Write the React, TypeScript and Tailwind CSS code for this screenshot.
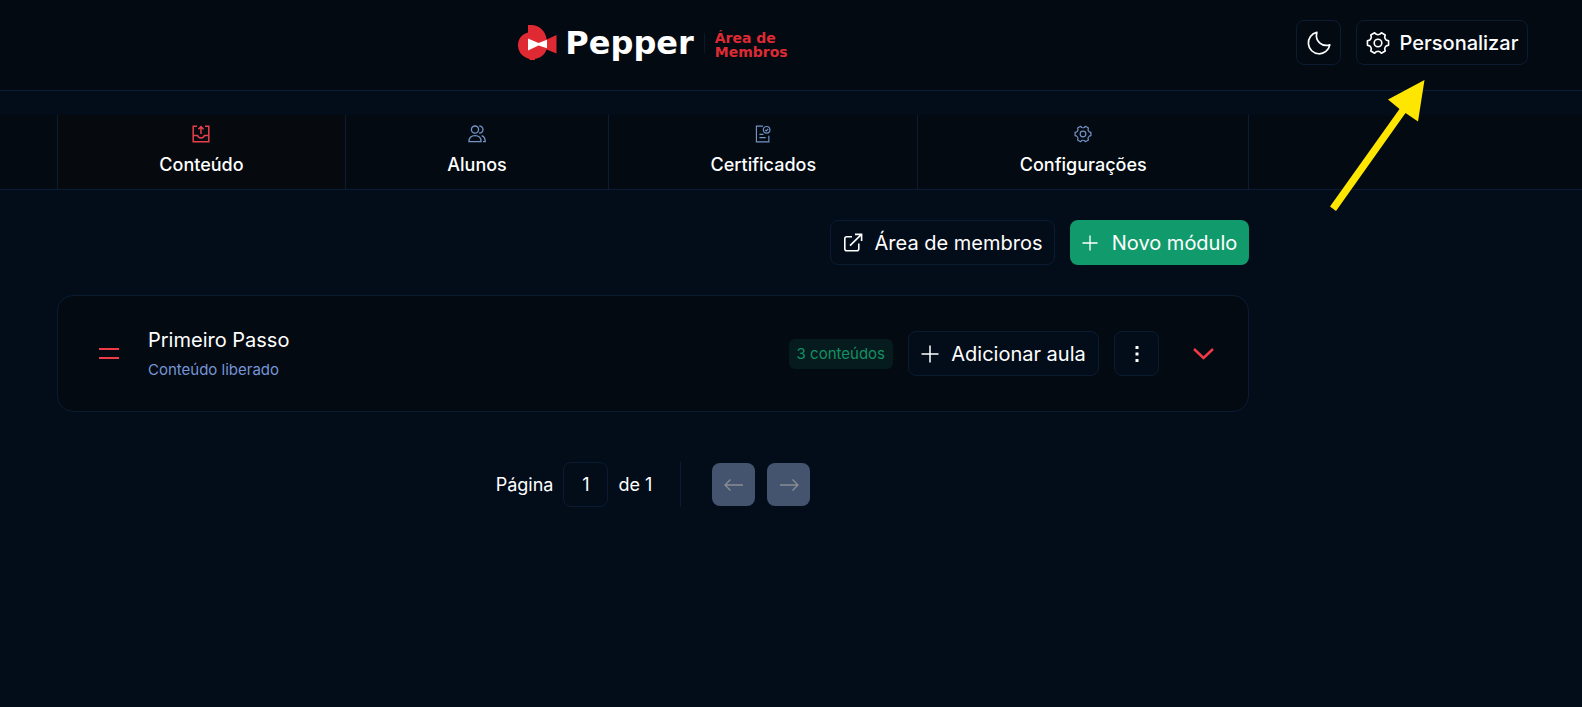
import type { ReactNode } from "react";

type IconProps = { className?: string };

function gearPath() {
  const point = (r: number, deg: number) => {
    const a = (deg * Math.PI) / 180;
    return `${(12 + r * Math.cos(a)).toFixed(2)} ${(12 + r * Math.sin(a)).toFixed(2)}`;
  };
  let d = `M${point(10.8, -12)}`;
  for (let deg = 0; deg < 360; deg += 60) {
    d += `L${point(10.8, deg + 12)}L${point(8.8, deg + 19)}Q${point(8, deg + 30)} ${point(8.8, deg + 41)}L${point(10.8, deg + 48)}`;
  }
  return d + "Z";
}

const GEAR = gearPath();

function GearIcon({ className }: IconProps) {
  return (
    <svg viewBox="0 0 24 24" fill="none" stroke="currentColor" strokeWidth="1.6" strokeLinejoin="round" className={className}>
      <path d={GEAR} />
      <circle cx="12" cy="12" r="3.8" />
    </svg>
  );
}

function MoonIcon({ className }: IconProps) {
  return (
    <svg viewBox="2 2 20 20" fill="none" stroke="currentColor" strokeWidth="1.4" strokeLinejoin="round" className={className}>
      <path d="M10.2 3.2A9 9 0 1 0 21 13.600C14.500 15.500 8.400 10.500 10.2 3.2Z" />
    </svg>
  );
}

function TrayIcon({ className }: IconProps) {
  return (
    <svg viewBox="0 0 18 18" fill="none" stroke="currentColor" strokeWidth="1.5" className={className}>
      <path d="M5 1.2H1.2V16.8H16.8V1.2H13" />
      <path d="M1.2 10.5H5.6C6.2 12.2 7.4 13 9 13S11.8 12.2 12.4 10.5H16.8" />
      <path d="M9 9V1.8M6.4 4.2L9 1.6L11.6 4.2" />
    </svg>
  );
}

function UsersIcon({ className }: IconProps) {
  return (
    <svg viewBox="0 0 18 18" fill="none" stroke="currentColor" strokeWidth="1.3" className={className}>
      <circle cx="7" cy="4.6" r="3.6" />
      <path d="M.9 16.6C.9 12.8 3 10.6 7 10.6S13.1 12.8 13.1 16.6Z" />
      <path d="M11.2 1.2C13.4.8 15 2.4 15 4.6S13.4 8.2 11.2 8M13.6 10.7C16 11.4 17.2 13.4 17.2 16.6H15" />
    </svg>
  );
}

function CertificateIcon({ className }: IconProps) {
  return (
    <svg viewBox="0 0 18 20" fill="none" stroke="currentColor" strokeWidth="1.3" className={className}>
      <path d="M9 1.2H1.7V18.8H15.5V12" />
      <circle cx="13" cy="5.4" r="3.7" />
      <path d="M11.3 5.4L12.6 6.6L14.8 4.4M5 10.5H9.5M5 14H12" />
    </svg>
  );
}

function ExternalIcon({ className }: IconProps) {
  return (
    <svg viewBox="0 0 20 20" fill="none" stroke="currentColor" strokeWidth="1.6" className={className}>
      <path d="M9 3.8H3.8Q1.8 3.8 1.8 5.8V15.8Q1.8 17.8 3.8 17.8H13.8Q15.8 17.8 15.8 15.8V10.4" />
      <path d="M7 12.6L18.2 1.6M12 1.4H18.6V8" />
    </svg>
  );
}

function PlusIcon({ className }: IconProps) {
  return (
    <svg viewBox="0 0 18 18" fill="none" stroke="currentColor" strokeWidth="1.5" className={className}>
      <path d="M9 .5V17.5M.5 9H17.5" />
    </svg>
  );
}

function ArrowIcon({ className }: IconProps) {
  return (
    <svg viewBox="0 0 20 14" fill="none" stroke="currentColor" strokeWidth="1.3" className={className}>
      <path d="M1 7H19M6.5 1.5L1 7L6.5 12.5" />
    </svg>
  );
}

function Logo() {
  return (
    <a href="#" className="flex items-center text-[#df2a33]" aria-label="Pepper Área de Membros">
      <svg viewBox="0 0 39 36" className="h-9 w-[39px]">
        <path
          fill="currentColor"
          d="M10 0H13C21 0 27.500 5.500 28.700 14.500L38.500 10V28.500L28.500 24.500C27 29.500 22.500 33.200 17 33.800V35H12L11 33.700C4.500 32 0 27 0 20.500C0 13.500 4 9 10 7.500Z"
        />
        <path fill="#fff" d="M10 13.500L20.500 18L29 14.800V23.200L20.500 20.500L10 25.500Z" />
      </svg>
      <span className="ml-2 font-['DejaVu_Sans',sans-serif] text-[32px] leading-9 font-bold text-white">Pepper</span>
      <span className="ml-2.5 h-5 w-px bg-[#0a1828]" />
      <span className="ml-2.5 pt-1 font-['DejaVu_Sans',sans-serif] text-[14px] leading-[14px] font-bold">
        Área de
        <br />
        Membros
      </span>
    </a>
  );
}

function Tab({ icon, label, active }: { icon: ReactNode; label: string; active?: boolean }) {
  return (
    <button
      role="tab"
      aria-selected={!!active}
      className={`flex flex-auto flex-col items-center gap-2.5 border-r border-[#0e1c31] pt-2.5 ${active ? "bg-[#06090d] text-[#e8404a]" : "text-[#7592c4]"}`}
    >
      {icon}
      <span className="text-lg leading-6 font-medium text-white">{label}</span>
    </button>
  );
}

const outlined = "flex h-[45px] items-center justify-center rounded-lg border border-[#0b1c32]";

export default function App() {
  return (
    <div className="relative min-h-screen overflow-hidden bg-[#030c19] font-['Inter',sans-serif] text-white">
      <header className="flex h-[91px] border-b border-[#0b1c36] bg-[#030a12] pr-[54px] pl-[57px]">
        <div className="flex w-full max-w-[1192px] items-center justify-center pb-1">
          <Logo />
        </div>
        <div className="ml-auto flex shrink-0 gap-[15px] pt-5">
          <button className={`${outlined} w-[45px]`} aria-label="Tema escuro">
            <MoonIcon className="size-6" />
          </button>
          <button className={`${outlined} w-[172px] gap-2.5 text-xl font-medium`}>
            <GearIcon className="size-6" />
            Personalizar
          </button>
        </div>
      </header>

      <nav className="mt-6 h-[75px] border-b border-[#0b1c36] bg-[#030a12] pl-[57px]">
        <div role="tablist" className="flex h-full w-full max-w-[1192px] border-l border-[#0e1c31]">
          <Tab active icon={<TrayIcon className="size-[18px]" />} label="Conteúdo" />
          <Tab icon={<UsersIcon className="size-[18px]" />} label="Alunos" />
          <Tab icon={<CertificateIcon className="size-[18px]" />} label="Certificados" />
          <Tab icon={<GearIcon className="size-[18px]" />} label="Configurações" />
        </div>
      </nav>

      <main className="pt-[30px] pl-[57px]">
        <div className="w-full max-w-[1192px]">
          <div className="flex justify-end gap-[15px] text-xl">
            <a href="#" className={`${outlined} w-[225px] gap-3`}>
              <ExternalIcon className="size-5" />
              Área de membros
            </a>
            <button className="flex h-[45px] w-[179px] items-center justify-center gap-3.5 rounded-lg bg-[#119b6c]">
              <PlusIcon className="size-4" />
              Novo módulo
            </button>
          </div>

          <section className="mt-[30px] flex h-[117px] items-center rounded-2xl border border-[#0b1c32] bg-[#030a12] pr-[34px] pl-[41px]">
            <button aria-label="Reordenar" className="text-[#f03a45]">
              <svg viewBox="0 0 20 12" fill="none" stroke="currentColor" strokeWidth="2" className="h-3 w-5">
                <path d="M0 1H20M0 10H20" />
              </svg>
            </button>
            <div className="ml-[29px]">
              <h2 className="text-xl leading-7">Primeiro Passo</h2>
              <p className="mt-1 text-[15px] leading-6 text-[#7795d6]">Conteúdo liberado</p>
            </div>
            <span className="ml-auto rounded-md bg-[#061b1e] px-2 text-[15px] leading-[30px] text-[#139064]">3 conteúdos</span>
            <button className={`${outlined} ml-[15px] w-[191px] gap-3 bg-[#030c19] text-xl`}>
              <PlusIcon className="size-[18px]" />
              Adicionar aula
            </button>
            <button aria-label="Mais opções" className={`${outlined} ml-[15px] w-[45px] bg-[#030c19]`}>
              <svg viewBox="0 0 4 18" fill="currentColor" className="h-[18px] w-1">
                <path d="M.5 1H3.500V4H.5ZM.5 7.500H3.500V10.500H.5ZM.5 14H3.500V17H.5Z" />
              </svg>
            </button>
            <button aria-label="Expandir" className="ml-[34px] text-[#f03a45]">
              <svg viewBox="0 0 21 12" fill="none" stroke="currentColor" strokeWidth="2.5" className="h-3 w-[21px]">
                <path d="M1 1L10.500 10L20 1" />
              </svg>
            </button>
          </section>

          <div className="mt-[50px] flex h-[45px] items-center justify-center text-lg">
            <label htmlFor="page">Página</label>
            <input
              id="page"
              defaultValue="1"
              className="mx-2.5 size-[45px] rounded-lg border border-[#0b1c32] bg-transparent text-center"
            />
            <span>de 1</span>
            <span className="ml-7 h-full w-px bg-[#0b1c32]" />
            <button disabled aria-label="Página anterior" className="ml-[31px] flex size-[43px] items-center justify-center rounded-lg bg-[#44546e] text-[#898d94]">
              <ArrowIcon className="h-3.5 w-5" />
            </button>
            <button disabled aria-label="Próxima página" className="ml-3 flex size-[43px] items-center justify-center rounded-lg bg-[#44546e] text-[#898d94]">
              <ArrowIcon className="h-3.5 w-5 rotate-180" />
            </button>
          </div>
        </div>
      </main>

      <svg viewBox="0 0 96 132" className="pointer-events-none absolute top-20 right-[157px] h-[132px] w-24">
        <path fill="#ffe600" d="M95.500 0L89 41.500L76.500 33L7 131L1 126.500L70.500 29L59 19.500Z" />
      </svg>
    </div>
  );
}
